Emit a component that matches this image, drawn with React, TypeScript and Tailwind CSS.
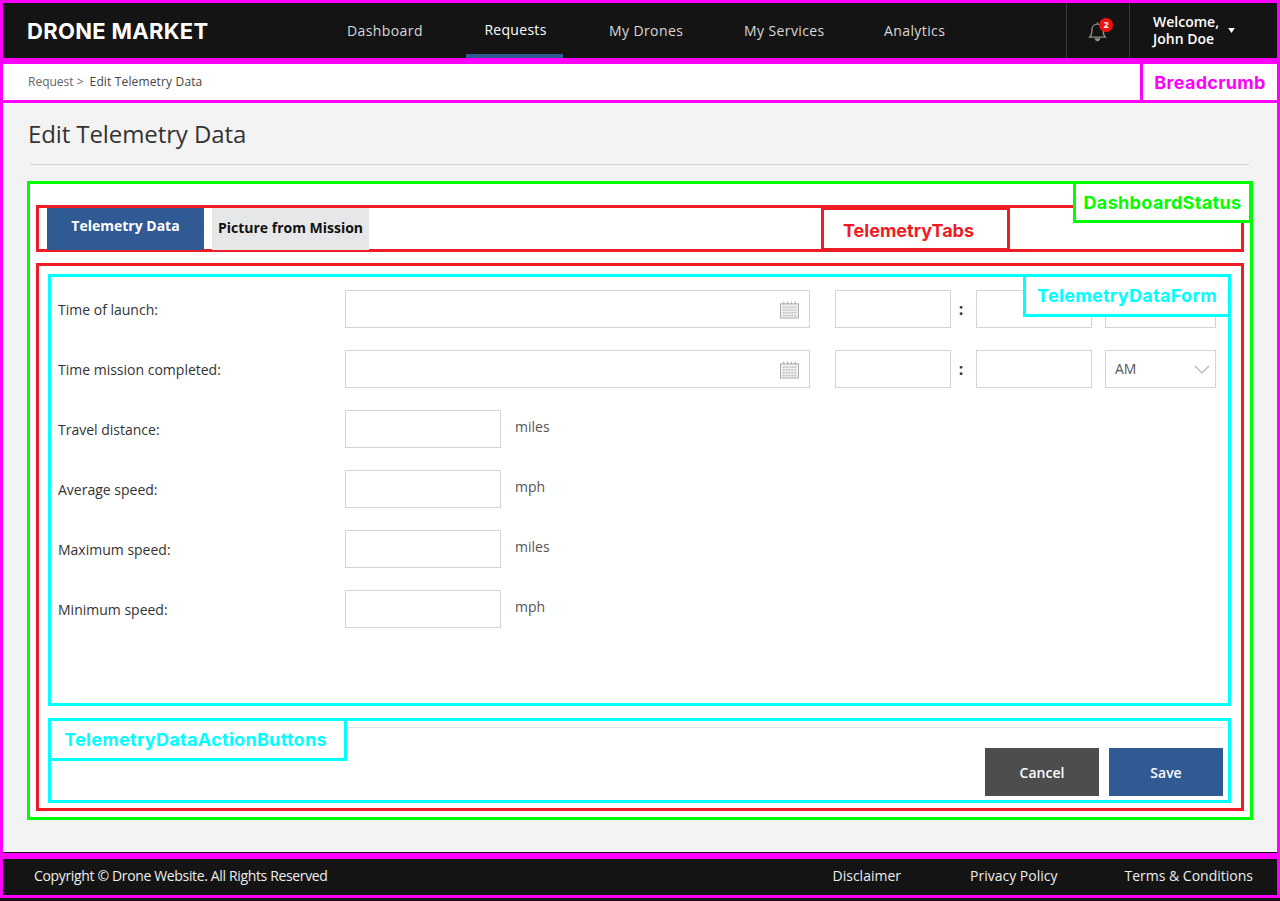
const Calendar = () => (
  <svg width="19" height="18" viewBox="0 0 20 18" className="absolute right-[10px] top-[10px]" fill="none" stroke="#a9a9a9">
    <rect x="0.5" y="2.5" width="19" height="15" fill="#efefef" />
    <path d="M4 0v3M8 0v3M12 0v3M16 0v3" />
    <path d="M3 6h14M3 9h14M3 12h14M3 15h14" strokeDasharray="2 1" />
  </svg>
);

const Chevron = () => (
  <svg width="16" height="9" viewBox="0 0 16 9" className="absolute right-[5px] top-[14px]" fill="none" stroke="#b5b5b5" strokeWidth="1.2">
    <path d="M1 1l7 7 7-7" />
  </svg>
);

const inputClass = "h-[38px] border border-[#d4d4d4] bg-white relative shrink-0";

function DateRow({ label, showAm }: { label: string; showAm: boolean }) {
  return (
    <div className="flex items-center h-[38px]">
      <div className="w-[287px] text-[14px] text-[#333]">{label}</div>
      <div className={`${inputClass} w-[465px]`}><Calendar /></div>
      <div className={`${inputClass} w-[116px] ml-[25px]`} />
      <div className="w-[25px] pr-[5px] text-center font-bold text-[16px] text-[#333]">:</div>
      <div className={`${inputClass} w-[116px]`} />
      <div className={`${inputClass} w-[111px] ml-[13px] flex items-center pl-[9px] pb-[2px] text-[14px] text-[#555]`}>
        {showAm ? "AM" : ""}
        <Chevron />
      </div>
    </div>
  );
}

function NumberRow({ label, unit }: { label: string; unit: string }) {
  return (
    <div className="flex h-[38px]">
      <div className="w-[287px] text-[14px] text-[#333] self-center">{label}</div>
      <div className={`${inputClass} w-[156px]`} />
      <div className="ml-[14px] text-[14px] text-[#555] leading-[34px]">{unit}</div>
    </div>
  );
}

function Tag({ text, cls }: { text: string; cls: string }) {
  return (
    <div className={`absolute bg-white border-[3px] flex items-center justify-center text-[18px] font-bold font-['Inter',sans-serif] ${cls}`}>
      {text}
    </div>
  );
}

const nav = [
  ["Dashboard", "w-[138px]"],
  ["Requests", "w-[124px]"],
  ["My Drones", "w-[135px]"],
  ["My Services", "w-[140px]"],
  ["Analytics", "w-[100px]"],
];

export default function App() {
  return (
    <div className="relative w-[1280px] h-[901px] overflow-hidden bg-[#141414] font-['Open_Sans',sans-serif]">
      <header className="h-[61px] border-[3px] border-[#ff00ff] bg-[#141414] flex items-stretch text-[#d8d8d8]">
        <div className="w-[344px] pl-[24px] pt-[2px] flex items-center text-[22px] font-bold text-white font-['Inter',sans-serif] tracking-[0.3px]">DRONE MARKET</div>
        <nav className="flex text-[14px] tracking-[0.4px]">
          {nav.map(([name, w]) => (
            <div key={name} className={`${w} flex items-center`}>
              {name === "Requests" ? (
                <div className="relative -ml-[19px] w-[97px] h-full flex items-center justify-center text-white font-medium pl-[2px] pt-[2px] tracking-[0.3px] border-b-4 border-[#2f5a94]">{name}</div>
              ) : (
                <span>{name}</span>
              )}
            </div>
          ))}
        </nav>
        <div className="ml-auto flex">
          <div className="relative w-[63px] border-l border-[#3a3a3a] flex items-center justify-center">
            <svg width="19" height="24" viewBox="0 0 22 24" fill="none" stroke="#8f8f86" strokeWidth="1.5" className="mr-[1px]">
              <path d="M2 19c2-2 2.500-4 2.500-8 0-4 2.500-7 6.500-7s6.500 3 6.500 7c0 4 .5 6 2.500 8z" />
              <path d="M11 4V2" />
              <path d="M8.500 20.500a2.500 2.500 0 0 0 5 0" fill="#8f8f86" />
            </svg>
            <div className="absolute left-[32px] top-[15px] w-[14px] h-[14px] rounded-full bg-[#ee1111] text-white text-[9px] font-bold flex items-center justify-center">2</div>
          </div>
          <div className="w-[148px] border-l border-[#3a3a3a] pl-[23px] flex items-center text-white text-[14px] font-semibold leading-[17px]">
            <div className="-mt-[1px]">Welcome,<br />John Doe</div>
            <svg width="7" height="5" viewBox="0 0 8 6" className="ml-[9px]" fill="white"><path d="M0 0h8L4 6z" /></svg>
          </div>
        </div>
      </header>

      <div className="h-[42px] border-[3px] border-[#ff00ff] bg-white pl-[25px] flex items-center text-[12px]">
        <span className="text-[#666]">Request &gt;</span>
        <span className="ml-[6px] text-[#444] tracking-[0.15px]">Edit Telemetry Data</span>
      </div>

      <main className="h-[753px] border-x-[3px] border-b-[3px] border-[#ff00ff] bg-[#f3f3f3] shadow-[inset_0_-1px_0_#111] pt-[15px]">
        <h1 className="ml-[25px] text-[24px] leading-[32px] text-[#333] font-medium tracking-[-0.1px]">Edit Telemetry Data</h1>
        <div className="ml-[27px] mr-[28px] mt-[14px] h-px bg-[#d5d5d5]" />

        <section className="ml-[24px] mr-[24px] mt-[16px] h-[639px] border-[3px] border-[#00ff00] bg-white px-[6px] pt-[21px]">
          <div className="h-[47px] border-[3px] border-[#ee1c25] pl-[8px] flex text-[14px] font-bold">
            <div className="w-[157px] h-[42px] bg-[#2f5a94] text-white flex items-center justify-center pb-[8px]">Telemetry Data</div>
            <div className="w-[157px] h-[42px] ml-[8px] bg-[#e6e7e8] text-[#111] flex items-center justify-center pb-[4px]">Picture from Mission</div>
          </div>

          <div className="mt-[11px] h-[548px] border-[3px] border-[#ee1c25] pl-[9px] pr-[10px] pt-[8px]">
            <div className="h-[432px] border-[3px] border-[#00ffff] pl-[7px] pt-[13px] flex flex-col gap-[22px]">
              <DateRow label="Time of launch:" showAm={false} />
              <DateRow label="Time mission completed:" showAm={true} />
              <NumberRow label="Travel distance:" unit="miles" />
              <NumberRow label="Average speed:" unit="mph" />
              <NumberRow label="Maximum speed:" unit="miles" />
              <NumberRow label="Minimum speed:" unit="mph" />
            </div>
            <div className="mt-[12px] h-[85px] border-[3px] border-[#00ffff] pr-[5px] pt-[6px]">
              <div className="h-px bg-[#e3e3e3]" />
              <div className="mt-[20px] flex justify-end gap-[10px] text-[14px] font-semibold text-white">
                <button className="w-[114px] h-[48px] bg-[#4d4d4d]">Cancel</button>
                <button className="w-[114px] h-[48px] bg-[#2f5a94]">Save</button>
              </div>
            </div>
          </div>
        </section>
      </main>

      <footer className="h-[42px] border-[3px] border-[#ff00ff] bg-[#141414] pl-[31px] pb-[3px] flex items-center text-[14px] text-[#eee]">
        <span className="tracking-[-0.35px]">Copyright © Drone Website. All Rights Reserved</span>
        <div className="ml-auto flex pr-[24px]">
          <span>Disclaimer</span>
          <span className="ml-[69px]">Privacy Policy</span>
          <span className="ml-[67px]">Terms &amp; Conditions</span>
        </div>
      </footer>

      <Tag text="Breadcrumb" cls="left-[1140px] top-[61px] w-[140px] h-[42px] border-[#ff00ff] text-[#ff00ff] tracking-[0.3px]" />
      <Tag text="DashboardStatus" cls="left-[1073px] top-[181px] w-[179px] h-[42px] border-[#00ff00] text-[#00ff00] tracking-[0.35px]" />
      <Tag text="TelemetryTabs" cls="left-[821px] top-[207px] w-[189px] h-[44px] border-[#ee1c25] text-[#ee1c25] pr-[14px] pt-[2px]" />
      <Tag text="TelemetryDataForm" cls="left-[1023px] top-[274px] w-[208px] h-[43px] border-[#00ffff] text-[#00ffff] tracking-[0.3px]" />
      <Tag text="TelemetryDataActionButtons" cls="left-[48px] top-[718px] w-[299px] h-[43px] border-[#00ffff] text-[#00ffff] tracking-[0.3px] pr-[4px]" />
    </div>
  );
}
